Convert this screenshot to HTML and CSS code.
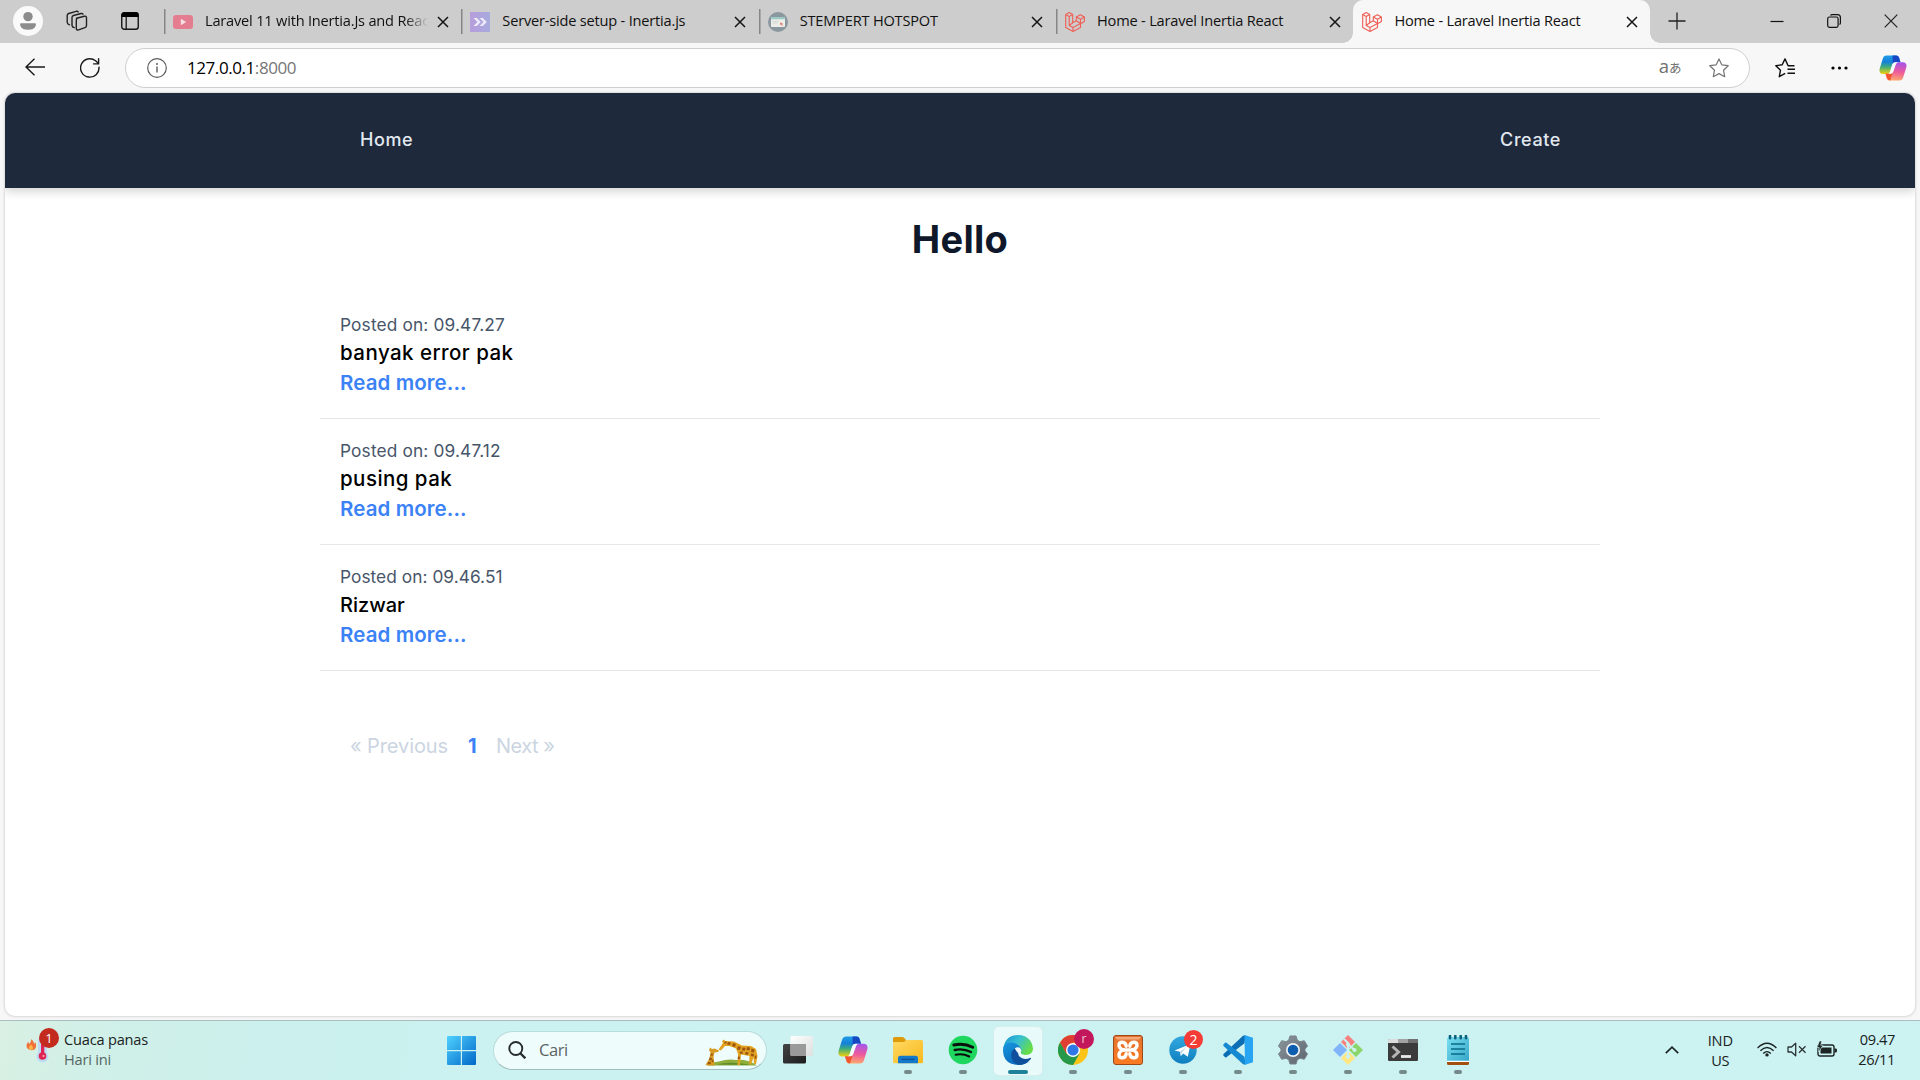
FILE: index.html
```html
<!DOCTYPE html>
<html lang="id">
<head>
<meta charset="utf-8">
<title>Home - Laravel Inertia React</title>
<link rel="stylesheet" href="styles.css">
</head>
<body>
<svg class="defs" width="0" height="0" aria-hidden="true">
  <defs>
    <linearGradient id="cop-left" x1="0" y1="0" x2="0" y2="1"><stop offset="0" stop-color="#1f9ce8"/><stop offset=".35" stop-color="#1580d8"/><stop offset=".62" stop-color="#3fae7a"/><stop offset="1" stop-color="#f4d10c"/></linearGradient>
    <linearGradient id="cop-right" x1=".3" y1="0" x2=".2" y2="1"><stop offset="0" stop-color="#a855e8"/><stop offset=".5" stop-color="#ee5a9c"/><stop offset="1" stop-color="#ffad6b"/></linearGradient>
    <linearGradient id="win" x1="0" y1="0" x2="1" y2="1"><stop offset="0" stop-color="#4fd2ff"/><stop offset="1" stop-color="#0067c8"/></linearGradient>
    <linearGradient id="folder" x1="0" y1="0" x2="1" y2="1"><stop offset="0" stop-color="#ffd964"/><stop offset="1" stop-color="#f9b91c"/></linearGradient>
    <linearGradient id="edge-top" x1="0" y1="0" x2="1" y2=".5"><stop offset="0" stop-color="#1b8fd2"/><stop offset=".5" stop-color="#35bfd4"/><stop offset="1" stop-color="#66dd48"/></linearGradient>
    <linearGradient id="edge-blue" x1="0" y1="0" x2=".6" y2="1"><stop offset="0" stop-color="#1597de"/><stop offset="1" stop-color="#0b66b8"/></linearGradient>
    <linearGradient id="inertia" x1="0" y1="0" x2="1" y2="0"><stop offset="0" stop-color="#b79ddb"/><stop offset="1" stop-color="#a7abdf"/></linearGradient>
    <linearGradient id="gear" x1="0" y1="0" x2="1" y2="1"><stop offset="0" stop-color="#8d969e"/><stop offset="1" stop-color="#5c646c"/></linearGradient>
    <linearGradient id="note" x1="0" y1="0" x2="1" y2="1"><stop offset="0" stop-color="#7be0f2"/><stop offset="1" stop-color="#35a6c9"/></linearGradient>
    <linearGradient id="tg" x1="0" y1="0" x2="0" y2="1"><stop offset="0" stop-color="#32a8df"/><stop offset="1" stop-color="#0f7fbf"/></linearGradient>
    <linearGradient id="xampp" x1="0" y1="0" x2="0" y2="1"><stop offset="0" stop-color="#e2732d"/><stop offset="1" stop-color="#fb7b22"/></linearGradient>
    <linearGradient id="dark" x1="0" y1="0" x2="1" y2="1"><stop offset="0" stop-color="#444"/><stop offset="1" stop-color="#1c1c1c"/></linearGradient>
    <linearGradient id="light" x1="0" y1="0" x2="1" y2="1"><stop offset="0" stop-color="#fff"/><stop offset="1" stop-color="#dedede"/></linearGradient>
    <symbol id="copilot" viewBox="0 0 30 28">
      <path d="M8 .5h10.500q2.300 0 3 2.300l1.500 5h-5.500q-2.500 0-3.200 2.500l-2.700 8.200q-.8 2-3 2H4.500Q-.6 20.500.7 14.500L4 4Q5 .5 8 .5z" fill="url(#cop-left)"/>
      <path d="M14.500.5h4q2.300 0 3 2.300l1.500 5h-5.500q-1.800 0-2.700 1.700z" fill="#1748c4"/>
      <path d="M22 27.500H11.500q-2.300 0-3-2.300L7 20.200h5q2.500 0 3.200-2.500l2.700-8q.8-2 3-2h4.600Q30.500 7.800 29.300 13.500L26 24q-1 3.500-4 3.500z" fill="url(#cop-right)"/>
      <path d="M7 20.200h5q1.800 0 2.800-1.700L12 27.500q-2.700 0-3.500-2.300z" fill="#f2562f"/>
      <path d="M17.300 7.800h4q-2.500 0-3.300 2.200l-2.800 8q-.7 2.200-3 2.200H9q2 0 2.700-2l2.600-8q.8-2.400 3-2.400z" fill="#f4fbfb"/>
    </symbol>
    <symbol id="laravel" viewBox="0 0 20 20">
      <g fill="none" stroke="#ef6158" stroke-width="1.150" stroke-linejoin="round">
        <path d="M.7 2.500L4.200.6l3.500 1.900v8.300l3.600-2.100V5l4.100-2.200L19.400 5v4.500l-3.900 2.200v3.900L8 19.500.7 15.500z"/>
        <path d="M.7 2.500l3.500 2 3.500-2M4.200 4.500v9L8 15.600l7.500-4.100M8 15.600v3.900M4.200 13.500l3.500-2.700M11.300 5l4.200 2.300L19.400 5M15.500 7.300v4.400M11.300 8.700l4.200 2.800"/>
      </g>
    </symbol>
    <symbol id="x" viewBox="0 0 12 12"><path d="M1 1l10 10M11 1L1 11" fill="none" stroke="#151515" stroke-width="1.500"/></symbol>
  </defs>
</svg>

<header class="tabstrip">
  <div class="strip-tools">
    <svg class="avatar" viewBox="0 0 30 30"><circle cx="15" cy="15" r="15" fill="#fafafa"/><circle cx="15" cy="10.600" r="4.700" fill="#8c8c8c"/><path d="M7.500 17.200h15q.9 1 0 3Q21 23.800 15 23.800T7.500 20.200q-.8-2 0-3z" fill="#8c8c8c"/></svg>
    <svg class="workspaces" viewBox="0 0 22 22"><g fill="none" stroke="#222" stroke-width="1.400" stroke-linejoin="round" stroke-linecap="round"><path d="M10.500 8.300l7.800-2.100q2-.4 2.200 1.400v7.900q0 1.600-1.500 2.100l-6.500 2.300q-2 .6-2.200-1.300V9.900q0-1.200 1.200-1.600z"/><path d="M8.300 17.600q-2.200-.3-2.300-2.200V7.500Q6 6 7.500 5.500l7.500-2q1.500-.3 2 .7"/><path d="M3.500 14.800Q1.300 14 1.200 12.200V5.500Q1.200 4 2.700 3.500l7.500-2.200q1.500-.3 2 .6"/></g></svg>
    <svg class="tab-actions" viewBox="0 0 18 18"><rect x=".75" y=".75" width="16.500" height="16.500" rx="2.500" fill="none" stroke="#161616" stroke-width="1.400"/><path d="M.5 5V3Q.5.3 3 .3h12q2.500 0 2.500 2.700v2z" fill="#000"/><path d="M5.200 5v12" stroke="#161616" stroke-width="1.300"/></svg>
  </div>
  <div class="tab">
    <svg class="favicon" viewBox="0 0 20 20"><rect y="3" width="20" height="14" rx="3" fill="#e57d90"/><path d="M7.800 6.800v6.400l5.400-3.200z" fill="#f7dfe3"/></svg>
    <span class="tab-title fade">Laravel 11 with Inertia.Js and React</span>
    <svg class="close"><use href="#x"/></svg>
  </div>
  <div class="tab">
    <svg class="favicon" viewBox="0 0 20 20"><path d="M0 0h20v20H0z" fill="url(#inertia)"/><path d="M3.500 6h3.300l4 4-4 4H3.500l4-4zM9.500 6h3.300l4 4-4 4H9.500l4-4z" fill="#efeaf8"/></svg>
    <span class="tab-title">Server-side setup - Inertia.js</span>
    <svg class="close"><use href="#x"/></svg>
  </div>
  <div class="tab">
    <svg class="favicon" viewBox="0 0 20 20"><circle cx="10" cy="10" r="10" fill="#8b979f"/><rect x="3" y="5" width="14" height="10" rx="1" fill="#ededea"/><path d="M3 7.300V6q0-1 1-1h12q1 0 1 1v1.300z" fill="#9ccbc6"/><path d="M4.500 9.300h6M4.500 11h5" stroke="#cbd3d2" stroke-width=".8"/><path d="M12 10.500l3 .8-1 .7 1 1.500-.8.500-1-1.500-.8.800z" fill="#e07b6b"/></svg>
    <span class="tab-title">STEMPERT HOTSPOT</span>
    <svg class="close"><use href="#x"/></svg>
  </div>
  <div class="tab">
    <svg class="favicon"><use href="#laravel"/></svg>
    <span class="tab-title">Home - Laravel Inertia React</span>
    <svg class="close"><use href="#x"/></svg>
  </div>
  <div class="tab active">
    <svg class="favicon"><use href="#laravel"/></svg>
    <span class="tab-title">Home - Laravel Inertia React</span>
    <svg class="close"><use href="#x"/></svg>
  </div>
  <svg class="new-tab" viewBox="0 0 18 18"><path d="M9 .5v17M.5 9h17" stroke="#222" stroke-width="1.300"/></svg>
  <div class="window-controls">
    <svg viewBox="0 0 14 14"><path d="M.5 7.500h13" stroke="#111" stroke-width="1.200"/></svg>
    <svg viewBox="0 0 14 14"><g fill="none" stroke="#111" stroke-width="1.200"><rect x=".7" y="3" width="10.400" height="10.400" rx="1.800"/><path d="M3.500 1.500Q4 .7 5 .7h5.500q2.900 0 2.900 2.900V9q0 1-.9 1.500"/></g></svg>
    <svg viewBox="0 0 14 14"><path d="M.7 .7l12.600 12.600M13.300 .7L.7 13.300" stroke="#222" stroke-width="1.200"/></svg>
  </div>
</header>

<div class="toolbar">
  <svg class="back" viewBox="0 0 20 18"><path d="M20 9H1M9.500.7L1 9l8.500 8.300" fill="none" stroke="#1a1a1a" stroke-width="1.400"/></svg>
  <svg class="reload" viewBox="0 0 20 20"><path d="M18.900 8.600A9.200 9.200 0 1 1 15.600 2.800L18.500 5.600M18.600.3v5.600h-5.500" fill="none" stroke="#1a1a1a" stroke-width="1.400"/></svg>
  <div class="address">
    <svg class="info" viewBox="0 0 20 20"><circle cx="10" cy="10" r="9.300" fill="none" stroke="#5c5c5c" stroke-width="1.200"/><path d="M10 8.600v6" stroke="#5c5c5c" stroke-width="1.400"/><circle cx="10" cy="6" r="1" fill="#5c5c5c"/></svg>
    <span class="url">127.0.0.1<span class="port">:8000</span></span>
    <span class="translate"><span class="latin">a</span><span class="kana">あ</span></span>
    <svg class="star" viewBox="0 0 20 20"><path d="M10 .9l2.800 5.900 6.400.9-4.700 4.500 1.200 6.500L10 15.600l-5.700 3.100 1.200-6.500L.8 7.700l6.400-.9z" fill="none" stroke="#757575" stroke-width="1.200" stroke-linejoin="round"/></svg>
  </div>
  <svg class="favorites" viewBox="0 0 20 20"><path d="M19.500 7.700h-6.400L10 .9 7.200 6.800.8 7.700l4.700 4.500-1.200 6.500 5.900-3.400" fill="none" stroke="#111" stroke-width="1.400" stroke-linejoin="round"/><path d="M12.500 11.300H20M12.500 15.200H20" stroke="#111" stroke-width="1.400"/></svg>
  <svg class="more" viewBox="0 0 17 4"><circle cx="2" cy="2" r="1.600"/><circle cx="8.500" cy="2" r="1.600"/><circle cx="15" cy="2" r="1.600"/></svg>
  <svg class="copilot-btn"><use href="#copilot"/></svg>
</div>

<div class="viewport">
  <div class="page">
    <nav class="site-nav">
      <a class="nav-link">Home</a>
      <a class="nav-link">Create</a>
    </nav>
    <main class="content">
      <h1 class="title">Hello</h1>
      <article class="post"><div class="date">Posted on: 09.47.27</div><p class="body">banyak error pak</p><a class="read">Read more...</a></article>
      <article class="post"><div class="date">Posted on: 09.47.12</div><p class="body">pusing pak</p><a class="read">Read more...</a></article>
      <article class="post"><div class="date narrow">Posted on: 09.46.51</div><p class="body short">Rizwar</p><a class="read">Read more...</a></article>
      <div class="pagination"><span>« Previous</span><span class="current">1</span><span class="next">Next »</span></div>
    </main>
  </div>
</div>

<footer class="taskbar">
  <div class="weather">
    <div class="weather-icon">
      <svg viewBox="0 0 26 26"><path d="M5 2q3 2 3 4.500Q9.500 6 9.500 5q1.500 6-1 7.500-3.500 1.500-6.500-.5Q-1 9 2 5q1 1 1.300 2Q5.500 5 5 2z" fill="#f0713a"/><path d="M4.700 7.500q3 2 2 5-2 .8-3.500-.2-1-2.300 1.500-4.800z" fill="#fdb64a"/><path d="M12 2h9v13.500a6 6 0 1 1-9 0z" fill="#bfdcf5"/><circle cx="16.500" cy="19" r="3.800" fill="#df2453"/><path d="M15 3h3.300v14H15z" fill="#df2453"/><circle cx="17.500" cy="19" r="1" fill="#fbb"/></svg>
      <span class="badge weather-badge">1</span>
    </div>
    <div class="weather-text"><div>Cuaca panas</div><div class="muted">Hari ini</div></div>
  </div>
  <div class="apps">
    <svg class="start" viewBox="0 0 29 29"><path d="M1 0h12.800v14H0V1q0-1 1-1zM15 0h13q1 0 1 1v13H15zM0 15.200h13.800V29H1q-1 0-1-1zM15 15.200h14V28q0 1-1 1H15z" fill="url(#win)"/></svg>
    <div class="search">
      <svg class="lens" viewBox="0 0 18 18"><circle cx="7.800" cy="7.500" r="6.500" fill="none" stroke="#262c2c" stroke-width="1.900"/><path d="M12.300 12.300l5 5" stroke="#262c2c" stroke-width="2.300"/></svg>
      <span class="search-text">Cari</span>
      <svg class="giraffes" viewBox="0 0 53 28">
        <path d="M2 26.500q5-3.500 12-4 9-3 17-1.500 12-1 21 5.500z" fill="#8fae3a"/><path d="M12 25.500q12-3.500 34 .5z" fill="#5f8c2c"/>
        <path d="M.5 26L4.500 19.500 5.500 13 4 11.500 5 8.500 7 10 9.500 9.500 14 11.500 13 13 9.500 13.500 8.500 18 9.500 26.500H3z" fill="#d79a22"/>
        <path d="M13.500 10.500L18 4 17 2.500 18.500.5 20.500 2 29 2.500 37 6.500 46 7 51 10 52.500 17 51 25H49L48.500 18.500 46 25.500H44L44.500 17 36 15.500 35 26H32.500L33 15 31 9.500 24.500 7 20 7 16 11.500z" fill="#e3a322"/>
        <g fill="#9c560f"><path d="M23 3l3 .5-1 2.500-3-.5zM28 4l3 1-1 3-3-1zM33 7l3 1-1 3-3-.5zM37.500 8.500l3 .3-.5 3-3-.3zM42 8l3 .4-.5 3-3-.3zM46.500 9.500l3 1-.5 3-3-.5zM35 12.500l3 .2-.5 2.300-2.800-.5zM40.500 13l3 .3-.5 2.500-2.800-.4zM46 14.500l3 .5-.3 2.500-2.800-.6zM33 17.500l2 .3-.3 2.500-2-.2zM50 16.500l1.500.3-.3 3-1.500-.3zM6 14.500l2 .3-.5 2-2-.3zM4.500 18.500l2.500.5-.6 2.500-2.500-.4zM3 23l3 .3-.5 2-3-.3zM7 20.500l1.500.3v2.500l-1.800-.3zM20 2.500l2 .3-1 2-2-.6z"/></g>
      </svg>
    </div>
    <div class="icons">
      <div class="app"><svg viewBox="0 0 30 30"><rect y="9" width="23" height="19.500" rx="1.500" fill="url(#dark)"/><rect x="7.500" y="1" width="22.500" height="20" rx="1.500" fill="url(#light)" opacity=".96"/><path d="M7.500 9H23v12H8.500q-1 0-1-1z" fill="#9a9a9a"/></svg></div>
      <div class="app"><svg viewBox="0 0 30 30"><use href="#copilot" y="1" width="30" height="28"/></svg></div>
      <div class="app running"><svg viewBox="0 0 30 30"><path d="M0 7V3.500Q0 2 1.500 2H9q1.500 0 2.300 1L13 5h2v5H0z" fill="#dd9a0a"/><path d="M0 7h11l2-2h15.500Q30 5 30 6.500v20.300q0 1.500-1.500 1.500h-27Q0 28.300 0 26.800z" fill="url(#folder)"/><path d="M5 28.300v-5.300q0-2.200 2.200-2.200h15.600q2.200 0 2.200 2.200v5.300z" fill="#1479cb"/><path d="M8.500 24.300h13" stroke="#0a518f" stroke-width="1.200"/></svg></div>
      <div class="app running"><svg viewBox="0 0 30 30"><circle cx="15" cy="15" r="14.300" fill="#1fd75f"/><g fill="none" stroke="#0b0f0c" stroke-linecap="round"><path d="M5.800 10q9.700-2.400 19 2.200" stroke-width="2.900"/><path d="M6.700 15q8.500-2 16.300 2" stroke-width="2.400"/><path d="M7.600 19.700q7.400-1.600 13.600 1.800" stroke-width="2"/></g></svg></div>
      <div class="app selected"><svg viewBox="0 0 30 30"><path d="M.6 12Q3 0 15 0q7.500 0 12 5.300Q30 9.500 30 13.500q0 6.500-7.500 6.500-5 0-5-2.500 0-1 .7-2 .4-3-2.700-5.500Q10 6 .6 12z" fill="url(#edge-top)"/><path d="M0 15Q0 7.600 8 7.600q6 0 9 4 2 2.600 1.200 4-3.200 1.300-3.200 4 0 5 6 6.900 3 1 5.500-.5Q22 30 15 30 0 29 0 15z" fill="url(#edge-blue)"/><path d="M11.500 13.700Q8.200 16 8.200 20q0 7.500 8 9.900Q23.500 29.500 28 23.700q.3-1.200-1-.7-5.500 2.500-10-1-2.600-2.400-1.400-5.500-1.600-2.600-4.100-2.800z" fill="#104f9c"/><path d="M11.800 13.600q2-2 4.600-1 2.300 1.400 1.700 3.500-1.400 1.800.2 3 2 1.200 5 .8-3.500 1.400-6.500-.2-3-2.300-5-6.100z" fill="#eefafa"/></svg></div>
      <div class="app running"><svg viewBox="0 0 30 30"><circle cx="15" cy="15" r="15" fill="#fbc418"/><path d="M2 7.500A15 15 0 0 1 28 7.500H15L8.500 19z" fill="#df3f32"/><path d="M2 7.500A15 15 0 0 0 15 30l6.500-11.200H8.500z" fill="#25984a"/><circle cx="15" cy="15" r="7" fill="#fff"/><circle cx="15" cy="15" r="5.600" fill="#2d78e6"/></svg><span class="badge profile">r</span></div>
      <div class="app running"><svg viewBox="0 0 30 30"><rect x=".5" y=".5" width="29" height="29" rx="2.500" fill="url(#xampp)" stroke="#9d4a17"/><path d="M2 2h26l-2 2.500H4z" fill="#f3a77a"/><g fill="none" stroke="#fff" stroke-width="3.400" stroke-linecap="round" stroke-linejoin="round"><path d="M10.500 15H19.500"/><path d="M10.500 15Q6 13.500 6 10.300 6 7.200 9 7.200q3.800 0 4.200 4M19.500 15Q24 13.500 24 10.300q0-3.100-3-3.100-3.800 0-4.200 4M10.500 15Q6 16.500 6 19.700q0 3.100 3 3.100 3.800 0 4.200-4M19.500 15q4.500 1.500 4.500 4.700 0 3.100-3 3.100-3.800 0-4.200-4"/></g></svg></div>
      <div class="app running"><svg viewBox="0 0 30 30"><circle cx="15" cy="15" r="13.700" fill="url(#tg)"/><path d="M6.500 15.500L22.500 9l-2.700 12.800-4.500-3.200-2.500 2.400-.8-4.300z" fill="#fff"/><path d="M12 16.700l7-5-5.200 5.800-1 3.500z" fill="#b9d6e8"/></svg><span class="badge tg-badge">2</span></div>
      <div class="app running"><svg viewBox="0 0 30 30"><path d="M21.500 8.300L2.800 22.700.3 20.500v-1.200L20 .8l2.500-.5z" fill="#0b6db3"/><path d="M21.500 21.700L2.800 7.300.3 9.500v1.200L20 29.200l2.500.5z" fill="#1488d0"/><path d="M21.500 0L30 2.800v24.400L21.500 30q1-.5.500-2z" fill="#27a4f2"/></svg></div>
      <div class="app running"><svg viewBox="0 0 30 30"><path d="M12 1h6l1.300 4.200 2.700 1.500 4.300-1L29.500 11 27 14v2l2.500 3-3.200 5.300-4.300-1-2.700 1.500L18 29h-6l-1.300-4.200L8 23.300l-4.300 1L.5 19 3 16v-2L.5 11l3.200-5.300 4.300 1 2.700-1.500z" fill="url(#gear)" stroke="#7b848c" stroke-linejoin="round"/><circle cx="15" cy="15" r="7" fill="#f0f3f5"/><circle cx="15" cy="15" r="5.300" fill="#0c5dae"/></svg></div>
      <div class="app running"><svg viewBox="0 0 30 30"><path d="M15 0l7 7-7 7-7-7z" fill="#f77f7d"/><path d="M7 8l7 7-7 7-7-7z" fill="#80b3f8"/><path d="M23 8l7 7-7 7-7-7z" fill="#8bd56b"/><path d="M15 16l7 7-7 7-7-7z" fill="#ffe680"/><g fill="none" stroke="#ccf2f1" stroke-width="2"><path d="M11 4l4 4v16M16 10l6 5.500"/></g><circle cx="15" cy="9.500" r="2.100" fill="#ccf2f1"/><circle cx="15" cy="21.500" r="2.100" fill="#ccf2f1"/><circle cx="21.500" cy="15" r="2.100" fill="#ccf2f1"/></svg></div>
      <div class="app running"><svg viewBox="0 0 30 30"><rect y="4" width="30" height="22" rx="1.200" fill="#3b3b3b"/><path d="M0 8V5q0-1 1-1h9v4z" fill="#dcdcdc"/><path d="M10 4h10v4H10z" fill="#a2a2a2"/><path d="M20 4h9q1 0 1 1v3H20z" fill="#707070"/><path d="M4.500 11.500l6 5.500-6 5.500" fill="none" stroke="#b5b5b5" stroke-width="3"/><path d="M13 21.500h10" stroke="#e8e8e8" stroke-width="2.800"/></svg></div>
      <div class="app running"><svg viewBox="0 0 30 30"><path d="M4 25h22v3.500q0 1.500-1.500 1.500h-19Q4 30 4 28.500z" fill="#a3500e"/><path d="M4 24h22v3H4z" fill="#fff"/><path d="M4 4.500Q4 2 6.500 2h17Q26 2 26 4.500v21.300H4z" fill="url(#note)"/><path d="M8 9h14M8 14h14M8 19h14" stroke="#076b86" stroke-width="1.600"/><path d="M7 .9v2.400M12.300.9v2.400M17.700.9v2.400M23 .9v2.400" stroke="#0c6079" stroke-width="2.600" stroke-linecap="round"/></svg></div>
    </div>
  </div>
  <div class="tray">
    <svg class="chevron" viewBox="0 0 14 8"><path d="M.8 7.200L7 1.200l6.200 6" fill="none" stroke="#1c2424" stroke-width="1.700"/></svg>
    <div class="lang"><div>IND</div><div>US</div></div>
    <div class="status">
      <svg class="wifi" viewBox="0 0 20 15"><g fill="none" stroke="#1c2424" stroke-width="1.400"><path d="M.6 6Q10-3.600 19.400 6M3.400 8.800q6.600-6.600 13.200 0M6.200 11.500q3.800-3.800 7.600 0"/></g><circle cx="10" cy="12.900" r="1.700" fill="#1c2424"/></svg>
      <svg class="speaker" viewBox="0 0 20 15"><g fill="none" stroke="#2b3434" stroke-width="1.300" stroke-linejoin="round"><path d="M1 5h3.500L8.700 1.200v12.600L4.500 10H1z"/><path d="M12 4.300l6.500 6.500M18.500 4.300L12 10.800"/></g></svg>
      <svg class="battery" viewBox="0 0 20 16"><rect x="1" y="4" width="16" height="11" rx="2" fill="none" stroke="#1c2424" stroke-width="1.400"/><path d="M17.500 7.500H19q1 0 1 2t-1 2h-1.500z" fill="#1c2424"/><path d="M3.500 6.500h11v6h-11z" fill="#1c2424"/><path d="M2.500 0L0 6.500h2.200L1.700 11 6 4.300H3.700L4.700 0z" fill="#1c2424" stroke="#cdf3f3" stroke-width=".6"/></svg>
    </div>
    <div class="clock"><div>09.47</div><div>26/11</div></div>
  </div>
</footer>
</body>
</html>
```
FILE: styles.css
```css
* { box-sizing: border-box; }

body {
  margin: 0;
  width: 1920px;
  height: 1080px;
  overflow: hidden;
  display: flex;
  flex-direction: column;
  background: #f7f7f7;
  font-family: "Open Sans", "Noto Sans", sans-serif;
  color: #111;
}

svg { display: block; flex: none; }
.defs { position: absolute; }

/* Tab strip */
.tabstrip {
  height: 43px;
  display: flex;
  align-items: center;
  background: #cdcdcd;
}
.strip-tools {
  width: 164px;
  display: flex;
  align-items: center;
  padding-left: 13px;
}
.avatar { width: 30px; height: 30px; margin-top: -1px; }
.workspaces { width: 22px; height: 22px; margin-left: 23px; margin-top: -1px; }
.tab-actions { width: 18px; height: 18px; margin-left: 33px; margin-top: -1px; }

.tab {
  width: 297.350px;
  height: 43px;
  display: flex;
  align-items: center;
  padding: 0 12px 0 9px;
  background: linear-gradient(#868686, #868686) 0 9px / 1.500px 25px no-repeat;
}
.tab .favicon { width: 20px; height: 20px; margin-top: 1px; }
.tab-title {
  width: 223px;
  margin-left: 12px;
  font-size: 14.600px;
  line-height: 20px;
  letter-spacing: -0.2px;
  white-space: nowrap;
  overflow: hidden;
  margin-top: -3px;
}
.tab-title.fade { -webkit-mask-image: linear-gradient(90deg, #000 200px, transparent 223px); mask-image: linear-gradient(90deg, #000 200px, transparent 223px); }
.close { width: 12px; height: 12px; margin-left: 8.500px; margin-top: 1px; }
.tab.active {
  position: relative;
  width: 296.600px;
  background: #f7f7f7;
  border-radius: 10px 10px 0 0;
}
.tab.active::before,
.tab.active::after {
  content: "";
  position: absolute;
  bottom: 0;
  width: 10px;
  height: 10px;
}
.tab.active::before { left: -10px; background: radial-gradient(circle at 0 0, #cdcdcd 9.500px, #f7f7f7 10px); }
.tab.active::after { right: -10px; background: radial-gradient(circle at 100% 0, #cdcdcd 9.500px, #f7f7f7 10px); }

.new-tab { width: 18px; height: 18px; margin: -1px 0 0 18px; }
.window-controls { margin-left: auto; display: flex; gap: 43px; padding-right: 22px; margin-top: -1px; }
.window-controls svg { width: 14px; height: 14px; }

/* Toolbar */
.toolbar {
  height: 50px;
  display: flex;
  align-items: center;
  padding-left: 25px;
}
.back { width: 20px; height: 18px; margin-top: -2px; }
.reload { width: 20px; height: 20px; margin-left: 35px; margin-top: -1px; }
.address {
  width: 1625px;
  height: 40px;
  margin-left: 25px;
  display: flex;
  align-items: center;
  padding: 0 20px 0 21px;
  background: #fff;
  border: 1px solid #cfcfcf;
  border-radius: 20px;
}
.info { width: 20px; height: 20px; }
.url {
  margin: -1px 0 0 20px;
  font-size: 17px;
  line-height: 24px;
  letter-spacing: -0.430px;
  color: #000;
}
.port { color: #767676; }
.translate { margin: -2px 0 0 auto; display: flex; align-items: baseline; color: #6f6f6f; line-height: 20px; }
.latin { font-size: 18.500px; }
.kana { font: 12.500px/20px "Noto Sans CJK JP", sans-serif; }
.star { width: 20px; height: 20px; margin-left: 27.500px; }
.favorites { width: 20px; height: 20px; margin-left: 25px; }
.more { width: 17px; height: 4px; margin-left: 36px; }
.copilot-btn { width: 28px; height: 26px; margin-left: 31px; }

/* Page */
.viewport { height: 927px; padding: 0 5px 4px; }
.page {
  height: 923px;
  background: #fff;
  border-radius: 10px;
  overflow: hidden;
  box-shadow: 0 0 2px 1px #d9d9d9;
  font-family: Inter, "Open Sans", sans-serif;
}
.site-nav {
  height: 95px;
  display: flex;
  align-items: center;
  justify-content: space-between;
  padding: 0 354px 2px 355px;
  background: #1e293b;
  box-shadow: 0 4px 9px rgba(0, 0, 0, .16);
}
.nav-link { font-size: 18px; font-weight: 500; letter-spacing: .6px; color: #e2e8f0; }
.content { width: 1280px; margin: 0 auto; padding-top: 29px; }
.title {
  margin: 0 0 31px;
  font-size: 38px;
  line-height: 45px;
  font-weight: 700;
  letter-spacing: .3px;
  text-align: center;
  color: #0f172a;
}
.post { height: 126px; padding: 20px; border-bottom: 1px solid #e5e7eb; }
.date { font-size: 17.300px; line-height: 24px; height: 25px; letter-spacing: .15px; color: #475569; }
.date.narrow { letter-spacing: .05px; }
.body { margin: 0; font-size: 20.500px; line-height: 30px; font-weight: 500; letter-spacing: .45px; color: #000; }
.body.short { font-size: 20px; letter-spacing: 0; }
.read { display: block; font-size: 20.500px; line-height: 30px; font-weight: 600; letter-spacing: .1px; color: #3b82f6; }
.pagination {
  display: flex;
  gap: 20px;
  padding: 60px 30px 0;
  font-size: 20px;
  line-height: 30px;
  letter-spacing: -.1px;
  color: #cbd5e1;
}
.current { width: 8px; font-weight: 700; color: #3b82f6; }
.next { letter-spacing: -.5px; }

/* Taskbar */
.taskbar {
  height: 60px;
  display: flex;
  align-items: center;
  border-top: 1px solid #a9bfbf;
  background: linear-gradient(100deg, #d9f0e3 0, #d0f0e8 100px, #cbf0ee 300px, #cbf2f1 500px, #ccf2f2 100%);
  font-size: 14.600px;
  line-height: 20px;
  letter-spacing: -.2px;
  color: #1a2222;
}
.weather { width: 447px; display: flex; align-items: center; padding-left: 26px; }
.weather-icon { position: relative; width: 26px; height: 26px; margin-top: -2px; }
.weather-icon svg { width: 26px; height: 26px; }
.badge {
  position: absolute;
  width: 20px;
  height: 20px;
  border-radius: 50%;
  color: #fff;
  text-align: center;
  letter-spacing: 0;
}
.weather-badge { left: 13px; top: -9px; background: #c42b1f; font-size: 13px; line-height: 20px; }
.weather-text { margin-left: 12px; margin-top: -4px; }
.muted { color: #566564; }
.apps { display: flex; align-items: center; }
.start { width: 29px; height: 29px; }
.search {
  width: 274px;
  height: 39px;
  margin: -1px 0 0 17px;
  display: flex;
  align-items: center;
  padding: 0 8px 0 14px;
  background: #effcfc;
  border: 1px solid #b9dcdb;
  border-bottom-color: #9fbfbe;
  border-radius: 20px;
}
.lens { width: 18px; height: 18px; }
.search-text { margin-left: 13px; font-size: 16.500px; letter-spacing: -.4px; color: #5a6363; }
.giraffes { width: 53px; height: 28px; margin: 6px 0 0 auto; }
.icons { display: flex; gap: 7px; margin-left: 7px; }
.app {
  position: relative;
  width: 48px;
  height: 48px;
  display: flex;
  align-items: center;
  justify-content: center;
  border-radius: 5px;
}
.app svg { width: 30px; height: 30px; margin-top: -1px; }
.running::after,
.selected::after {
  content: "";
  position: absolute;
  left: 20px;
  bottom: 1px;
  width: 8px;
  height: 4px;
  border-radius: 2px;
  background: #758a8a;
}
.selected { background: #e8fafa; box-shadow: 0 0 0 1px #d7eeee; }
.selected::after { left: 14px; width: 20px; background: #1f8199; }
.profile { left: 25px; top: 2px; background: #c2185b; font-size: 12px; line-height: 19px; color: #f4c6d8; }
.tg-badge { left: 25px; top: 3px; width: 19px; height: 19px; background: #f43b35; font-size: 14px; line-height: 19px; }
.tray { flex: 1; display: flex; align-items: center; justify-content: flex-end; padding-right: 25px; }
.chevron { width: 14px; height: 8px; margin-top: -1px; }
.lang { width: 30px; margin-left: 26px; margin-top: -2px; text-align: center; }
.status { display: flex; align-items: center; margin-left: 22px; margin-top: -2px; gap: 10px; }
.wifi { width: 20px; height: 15px; }
.speaker { width: 20px; height: 15px; }
.battery { width: 20px; height: 16px; margin-top: -1px; }
.clock { margin-left: 21px; text-align: right; margin-top: -4px; letter-spacing: -.4px; }
```
